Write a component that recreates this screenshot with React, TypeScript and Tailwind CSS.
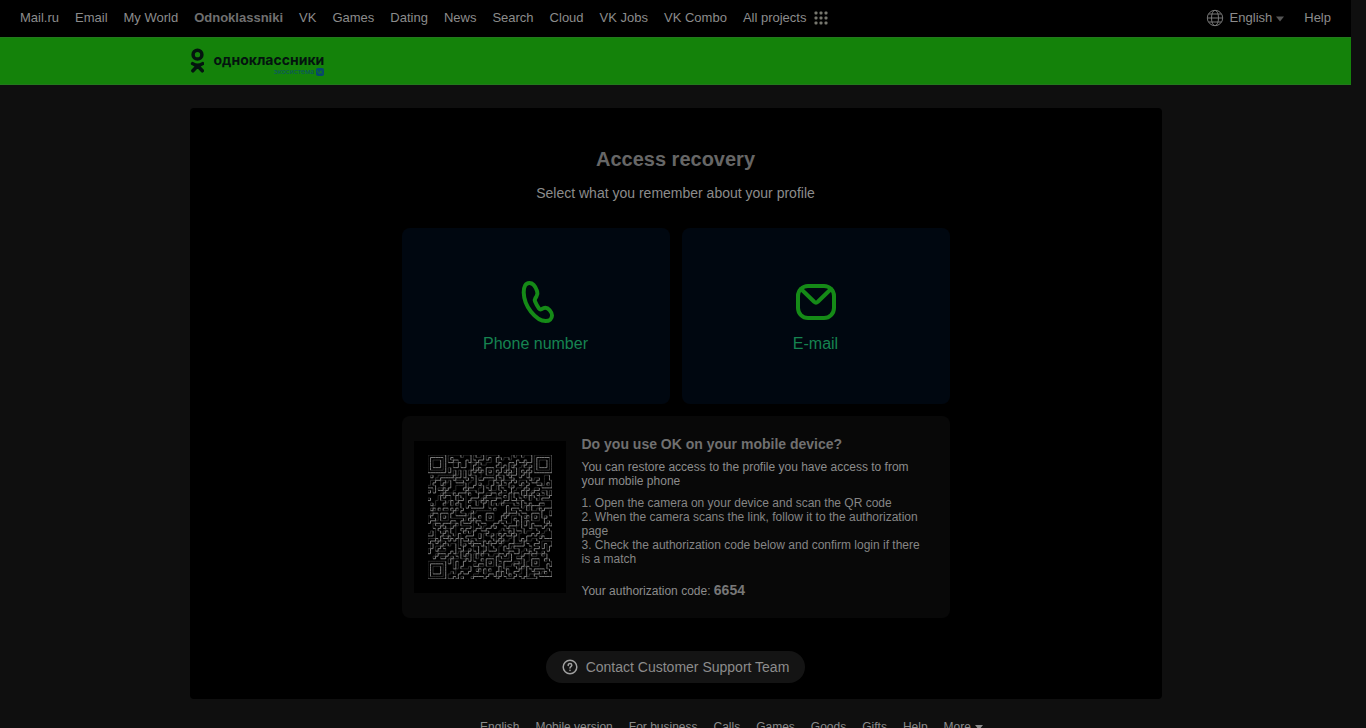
import type { ReactNode } from 'react';

const projects = [
    'Mail.ru',
    'Email',
    'My World',
    'Odnoklassniki',
    'VK',
    'Games',
    'Dating',
    'News',
    'Search',
    'Cloud',
    'VK Jobs',
    'VK Combo',
];

const footerLinks = [
    'English',
    'Mobile version',
    'For business',
    'Calls',
    'Games',
    'Goods',
    'Gifts',
    'Help',
];

const QR_SIZE = 49;
const QR_ALIGN = [6, 24, 42];

function inFinder(x: number, y: number) {
    return (
        (x < 8 && y < 8) ||
        (x >= QR_SIZE - 8 && y < 8) ||
        (x < 8 && y >= QR_SIZE - 8)
    );
}

function buildModules() {
    let seed = 6654;
    const cells: boolean[][] = [];
    for (let y = 0; y < QR_SIZE; y++) {
        cells.push([]);
        for (let x = 0; x < QR_SIZE; x++) {
            seed = (seed * 1103515245 + 12345) % 2147483648;
            let on = seed / 2147483648 > 0.5;
            if (y === 6 || x === 6) on = (x + y) % 2 === 0;
            if (inFinder(x, y)) {
                const cx = x < 8 ? 3 : QR_SIZE - 4;
                const cy = y < 8 ? 3 : QR_SIZE - 4;
                const d = Math.max(Math.abs(x - cx), Math.abs(y - cy));
                on = d !== 2 && d < 4;
            } else {
                for (const ax of QR_ALIGN) {
                    for (const ay of QR_ALIGN) {
                        if (inFinder(ax, ay)) continue;
                        const d = Math.max(Math.abs(x - ax), Math.abs(y - ay));
                        if (d <= 2) on = d !== 1;
                    }
                }
            }
            cells[y].push(on);
        }
    }
    return cells;
}

// module sides: "near" is the left/top side of a dark area, "far" the right/bottom one
function buildOutline() {
    const cells = buildModules();
    const at = (x: number, y: number) => cells[y]?.[x] ?? false;
    let near = '';
    let far = '';
    for (let y = 0; y <= QR_SIZE; y++) {
        for (let x = 0; x <= QR_SIZE; x++) {
            const here = at(x, y);
            if (here !== at(x - 1, y)) {
                if (here) near += `M${x} ${y}v1`;
                else far += `M${x} ${y}v1`;
            }
            if (here !== at(x, y - 1)) {
                if (here) near += `M${x} ${y}h1`;
                else far += `M${x} ${y}h1`;
            }
        }
    }
    return { near, far };
}

const qrOutline = buildOutline();

function QrCode() {
    return (
        <div className="shrink-0 bg-black p-3.5">
            <svg
                viewBox="0 0 49 49"
                className="size-31"
                role="img"
                aria-label="QR code"
                fill="none"
                strokeWidth="0.35"
            >
                <path d={qrOutline.near} stroke="#303030" />
                <path d={qrOutline.far} stroke="#8a8a8a" />
            </svg>
        </div>
    );
}

function Logo() {
    return (
        <a href="#" className="flex items-start text-[#04140f]">
            <svg viewBox="0 0 14 26" className="mt-2.5 h-6.5 w-3.5" fill="none">
                <g stroke="currentColor" strokeWidth="3.5">
                    <circle cx="7.500" cy="6.700" r="4.400" />
                    <path
                        d="M2.600 15.600c3 2 7 2 10 0M7.600 17.800l-4.700 5M7.600 17.800l4.700 5"
                        strokeLinecap="round"
                    />
                </g>
            </svg>
            <span className="mt-3.5 ml-2.5 flex flex-col items-end font-['Inter',sans-serif]">
                <span className="text-sm leading-4 font-bold">
                    одноклассники
                </span>
                <span className="flex items-center gap-0.5 text-[7px] leading-2 text-[#0b5364]">
                    экосистема
                    <svg viewBox="0 0 8 8" className="size-2">
                        <rect width="8" height="8" rx="2" fill="#07456f" />
                        <path
                            d="M1.5 2.5c.2 2 1.200 3 2.600 3v-3M6.300 2.500c-.4 1-1.200 1.500-2.200 1.500 1 0 1.900.6 2.300 1.600"
                            fill="none"
                            stroke="#15820d"
                            strokeWidth="0.8"
                        />
                    </svg>
                </span>
            </span>
        </a>
    );
}

function Toolbar() {
    return (
        <nav className="flex h-9.25 items-center justify-between bg-black px-5 pb-0.5 text-[13px] leading-4 whitespace-nowrap">
            <div className="flex items-center gap-4">
                {projects.map((name) => (
                    <a
                        key={name}
                        href="#"
                        className={
                            name === 'Odnoklassniki'
                                ? 'font-bold text-[#707070]'
                                : undefined
                        }
                    >
                        {name}
                    </a>
                ))}
                <a href="#" className="flex items-center gap-2">
                    All projects
                    <svg
                        viewBox="0 0 14 14"
                        className="size-3.5"
                        fill="#77776e"
                    >
                        {[0, 5, 10].map((y) =>
                            [0, 5, 10].map((x) => (
                                <rect
                                    key={`${x}-${y}`}
                                    x={x + 0.5}
                                    y={y + 0.5}
                                    width="3"
                                    height="3"
                                    rx="1"
                                />
                            ))
                        )}
                    </svg>
                </a>
            </div>
            <div className="flex items-center gap-5">
                <button type="button" className="flex items-center">
                    <svg
                        viewBox="0 0 18 18"
                        className="mr-1.5 size-4.5"
                        fill="none"
                        stroke="#777777"
                    >
                        <circle cx="9" cy="9" r="7.700" />
                        <ellipse cx="9" cy="9" rx="3.500" ry="7.700" />
                        <path d="M1.500 9h15M2.800 5h12.400M2.800 13h12.400" />
                    </svg>
                    English
                    <svg
                        viewBox="0 0 8 6"
                        className="mt-0.5 ml-1 h-1.5 w-2"
                        fill="#555555"
                    >
                        <path d="M0 .5h8L4 5.500z" />
                    </svg>
                </button>
                <a href="#">Help</a>
            </div>
        </nav>
    );
}

function Tile({ label, children }: { label: string; children: ReactNode }) {
    return (
        <button
            type="button"
            className="flex h-44 flex-1 flex-col items-center justify-center rounded-lg bg-[#000710] text-base leading-5 text-[#168350]"
        >
            <svg
                viewBox="0 0 48 48"
                className="mb-2 size-12"
                fill="none"
                stroke="#158a17"
                strokeWidth="4"
                strokeLinecap="round"
                strokeLinejoin="round"
            >
                {children}
            </svg>
            {label}
        </button>
    );
}

function MobileHint() {
    return (
        <section className="mt-3 flex items-center gap-4 rounded-lg bg-[#080808] px-3 pt-[19px] pb-5 text-xs leading-3.5">
            <QrCode />
            <div className="flex-1 pr-4">
                <h2 className="text-sm leading-4.5 font-bold text-[#707070]">
                    Do you use OK on your mobile device?
                </h2>
                <p className="mt-[7px]">
                    You can restore access to the profile you have access to
                    from your mobile phone
                </p>
                <ol className="mt-2 list-inside list-decimal text-[#858585]">
                    <li>Open the camera on your device and scan the QR code</li>
                    <li>
                        When the camera scans the link, follow it to the
                        authorization page
                    </li>
                    <li>
                        Check the authorization code below and confirm login if
                        there is a match
                    </li>
                </ol>
                <p className="mt-4">
                    Your authorization code:{' '}
                    <b className="text-sm leading-4 text-[#777777]">6654</b>
                </p>
            </div>
        </section>
    );
}

export default function App() {
    return (
        <div className="min-h-screen bg-[#0f0f0f] pr-[15px] font-['Liberation_Sans',Arial,sans-serif] text-[#8c8c8c]">
            <Toolbar />
            <header className="h-12 border-y border-[#227a1c] bg-[#14820a]">
                <div className="mx-auto max-w-[972px]">
                    <Logo />
                </div>
            </header>
            <main className="mx-auto mt-[23px] max-w-[972px] rounded bg-black pt-[39px] pb-4">
                <div className="mx-auto flex max-w-[548px] flex-col">
                    <h1 className="text-center text-xl leading-6 font-bold text-[#666666]">
                        Access recovery
                    </h1>
                    <p className="mt-3 text-center text-sm leading-5">
                        Select what you remember about your profile
                    </p>
                    <div className="mt-[25px] flex gap-3">
                        <Tile label="Phone number">
                            <path d="M17.300 4.900C13.500 4.900 11.600 9 11.700 14.500c.2 7 3 13.800 7.300 19.300 4 5 9.300 9.300 14.700 9.300 3.800 0 6.300-2.600 6.300-5.600 0-2-1-3.700-2.300-5.200-2-2.400-4.200-3-6.400-2l-2 .9c-.9.4-1.600.1-2.300-.8-1.600-2.100-2.900-4.400-3.900-6.900-.5-1.300-.4-2.300.3-3.400l1-1.500c1.200-1.800 1.400-3.300.7-5.400C23.500 8 21 4.900 17.300 4.900z" />
                        </Tile>
                        <Tile label="E-mail">
                            <rect x="6" y="8" width="36" height="32" rx="10" />
                            <path d="M9 11l13.200 12.800c1.100 1 2.500 1 3.600 0L39 11" />
                        </Tile>
                    </div>
                    <MobileHint />
                    <button
                        type="button"
                        className="mt-[33px] flex h-8 items-center gap-2 self-center rounded-full bg-[#141414] px-4 text-sm"
                    >
                        <svg
                            viewBox="0 0 16 16"
                            className="size-4"
                            fill="none"
                            stroke="#a0a0a0"
                            strokeWidth="1.5"
                            strokeLinecap="round"
                        >
                            <circle cx="8" cy="8" r="6.800" />
                            <path d="M6.200 6.400c0-1.100.8-1.800 1.800-1.800s1.800.7 1.800 1.600c0 1.300-1.800 1.400-1.800 2.700" />
                            <path d="M8 11.300v.1" />
                        </svg>
                        Contact Customer Support Team
                    </button>
                </div>
            </main>
            <footer className="mt-[21px] flex h-3.5 justify-center gap-4 pl-28 text-xs leading-3.5">
                {footerLinks.map((name) => (
                    <a key={name} href="#">
                        {name}
                    </a>
                ))}
                <button type="button" className="flex items-center gap-1">
                    More
                    <svg
                        viewBox="0 0 8 5"
                        className="h-1.25 w-2"
                        fill="currentColor"
                    >
                        <path d="M0 0h8L4 5z" />
                    </svg>
                </button>
            </footer>
        </div>
    );
}
